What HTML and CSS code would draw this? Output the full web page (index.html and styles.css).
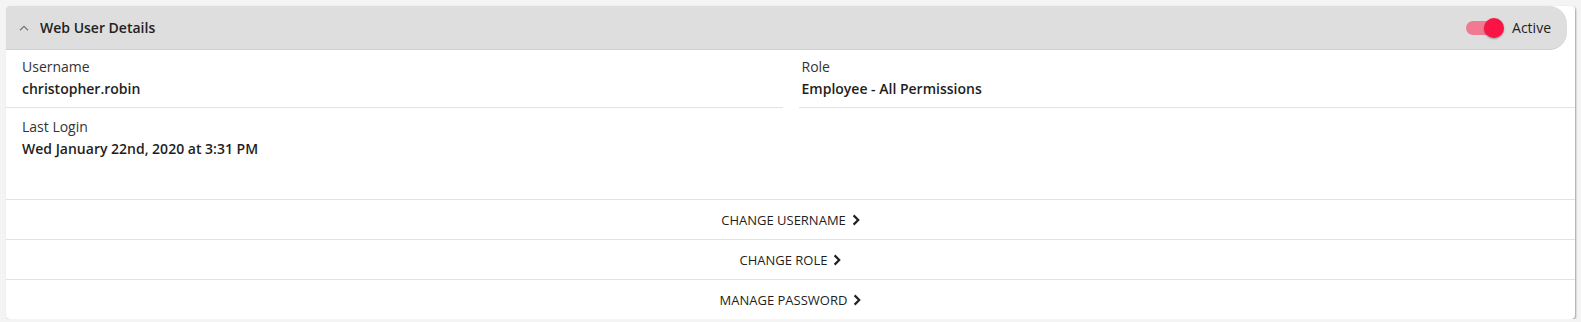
FILE: index.html
```html
<!DOCTYPE html>
<html lang="en">
<head>
    <meta charset="UTF-8">
    <title>Web User Details</title>
    <link rel="stylesheet" href="styles.css">
</head>
<body>
    <section class="card">
        <header class="card-head">
            <svg class="caret" width="10" height="6" viewBox="0 0 10 6"><path d="M1 5.2 L5 1.4 L9 5.2" fill="none" stroke="#777" stroke-width="1.3"/></svg>
            <h2 class="title">Web User Details</h2>
            <label class="toggle">
                <span class="track"><span class="thumb"></span></span>
                <span class="toggle-text">Active</span>
            </label>
        </header>
        <div class="fields">
            <div class="field">
                <div class="label">Username</div>
                <div class="value">christopher.robin</div>
            </div>
            <div class="field field-right">
                <div class="label">Role</div>
                <div class="value">Employee - All Permissions</div>
            </div>
            <div class="field field-last">
                <div class="label">Last Login</div>
                <div class="value">Wed January 22nd, 2020 at 3:31 PM</div>
            </div>
        </div>
        <ul class="actions">
            <li><a href="javascript:;">CHANGE USERNAME <svg width="8" height="12" viewBox="0 0 8 12"><path d="M1.6 1.4 L6.2 6 L1.6 10.6" fill="none" stroke="#222" stroke-width="2.2"/></svg></a></li>
            <li><a href="javascript:;">CHANGE ROLE <svg width="8" height="12" viewBox="0 0 8 12"><path d="M1.6 1.4 L6.2 6 L1.6 10.6" fill="none" stroke="#222" stroke-width="2.2"/></svg></a></li>
            <li><a href="javascript:;">MANAGE PASSWORD <svg width="8" height="12" viewBox="0 0 8 12"><path d="M1.6 1.4 L6.2 6 L1.6 10.6" fill="none" stroke="#222" stroke-width="2.2"/></svg></a></li>
        </ul>
    </section>
</body>
</html>
```

FILE: styles.css
```css
* {
    margin: 0;
    padding: 0;
    box-sizing: border-box;
}

ul,
li {
    list-style: none;
}

body {
    background: #f4f4f4;
    padding: 6px 6px 0 6px;
    font-family: "Open Sans", "Noto Sans", sans-serif;
    color: #222;
}

.card {
    background: #fff;
    border-radius: 4px;
    box-shadow: 1px 1px 2px rgba(0, 0, 0, 0.35);
    overflow: hidden;
}

.card-head {
    display: flex;
    align-items: center;
    height: 44px;
    margin-right: 8px;
    padding: 0 16px 0 13px;
    background: #dedede;
    border-bottom: 1px solid #cfcfcf;
    border-radius: 0 18px 18px 0;
}

.caret {
    margin-right: 11px;
}

.title {
    flex: 1;
    font-size: 14px;
    font-weight: 600;
    color: #222;
}

.toggle {
    display: flex;
    align-items: center;
}

.track {
    position: relative;
    width: 30px;
    height: 14px;
    margin-right: 16px;
    border-radius: 7px;
    background: #f07a91;
}

.thumb {
    position: absolute;
    right: -8px;
    top: -3px;
    width: 20px;
    height: 20px;
    border-radius: 50%;
    background: #fa1446;
    box-shadow: 0 1px 2px rgba(0, 0, 0, 0.35);
}

.toggle-text {
    font-size: 14px;
    color: #222;
}

.fields {
    display: grid;
    grid-template-columns: 1fr 1fr;
    column-gap: 16px;
}

.field {
    padding: 7px 16px 8px;
    border-bottom: 1px solid #e2e2e2;
}

.field-right {
    padding-left: 3px;
}

.field-last {
    border-bottom: none;
    height: 91px;
    padding-top: 9px;
}

.label {
    font-size: 14px;
    line-height: 20px;
    color: #333;
}

.value {
    margin-top: 2px;
    font-size: 14px;
    line-height: 20px;
    font-weight: 600;
    color: #1e1e1e;
}

.actions li {
    height: 40px;
    border-top: 1px solid #e2e2e2;
}

.actions a {
    display: flex;
    height: 100%;
    align-items: center;
    justify-content: center;
    gap: 6px;
    font-size: 13px;
    font-weight: 500;
    color: #1e1e1e;
    text-decoration: none;
}
```
